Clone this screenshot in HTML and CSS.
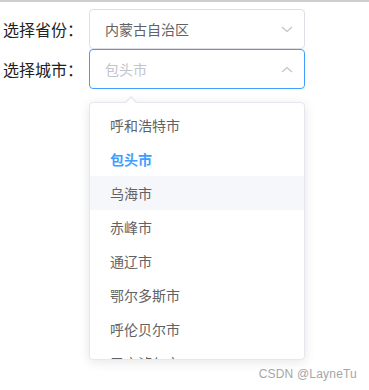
FILE: index.html
```html
<!DOCTYPE html>
<html lang="zh-CN">
<head>
<meta charset="utf-8">
<link rel="stylesheet" href="styles.css">
</head>
<body>
<div class="topline"></div>
<div class="form">
  <div class="row">
    <label class="label">选择省份：</label>
    <div class="select">
      <span class="value">内蒙古自治区</span>
      <svg class="arrow" width="12" height="7" viewBox="0 0 12 7"><path d="M1 1 L6 5.5 L11 1" fill="none" stroke="#c0c4cc" stroke-width="1.2"/></svg>
    </div>
  </div>
  <div class="row">
    <label class="label">选择城市：</label>
    <div class="select focus">
      <span class="value placeholder">包头市</span>
      <svg class="arrow" width="12" height="7" viewBox="0 0 12 7"><path d="M1 6 L6 1.5 L11 6" fill="none" stroke="#c0c4cc" stroke-width="1.2"/></svg>
    </div>
  </div>
  <div class="dropdown">
    <ul class="list">
      <li class="item">呼和浩特市</li>
      <li class="item selected">包头市</li>
      <li class="item hover">乌海市</li>
      <li class="item">赤峰市</li>
      <li class="item">通辽市</li>
      <li class="item">鄂尔多斯市</li>
      <li class="item">呼伦贝尔市</li>
      <li class="item">巴彦淖尔市</li>
    </ul>
  </div>
</div>
<div class="watermark">CSDN @LayneTu</div>
</body>
</html>
```
FILE: styles.css
```css
html, body {
  margin: 0;
  padding: 0;
  background: #fff;
  width: 369px;
  height: 390px;
  overflow: hidden;
  font-family: "Noto Sans CJK SC", "Noto Sans", sans-serif;
}
.topline {
  height: 2px;
  background: #cfcfcf;
}
.form {
  padding-top: 7px;
  position: relative;
}
.row {
  display: flex;
  align-items: center;
  height: 40px;
}
.label {
  width: 86px;
  padding-left: 3px;
  font-size: 16px;
  color: #222;
  line-height: 40px;
}
.select {
  box-sizing: border-box;
  width: 216px;
  height: 40px;
  border: 1px solid #dcdfe6;
  border-radius: 4px;
  display: flex;
  align-items: center;
  justify-content: space-between;
  padding: 0 10px 0 15px;
}
.select.focus {
  border-color: #409eff;
}
.value {
  font-size: 14px;
  color: #606266;
}
.value.placeholder {
  color: #c0c4cc;
}
.arrow {
  margin-right: 1px;
}
.dropdown {
  position: absolute;
  left: 89px;
  top: 100px;
  width: 216px;
  height: 258px;
  box-sizing: border-box;
  border: 1px solid #e4e7ed;
  border-radius: 4px;
  background: #fff;
  box-shadow: 0 2px 12px 0 rgba(0, 0, 0, 0.1);
}
.dropdown::before {
  content: "";
  position: absolute;
  left: 35px;
  top: -7px;
  border: 6px solid transparent;
  border-top: 0;
  border-bottom: 6px solid #e4e7ed;
}
.dropdown::after {
  content: "";
  position: absolute;
  left: 36px;
  top: -5px;
  border: 5px solid transparent;
  border-top: 0;
  border-bottom: 5px solid #fff;
}
.list {
  list-style: none;
  margin: 0;
  padding: 5px 0 0;
  height: 251px;
  overflow: hidden;
}
.item {
  height: 34px;
  line-height: 34px;
  padding: 0 20px;
  font-size: 14px;
  color: #606266;
}
.item.selected {
  color: #409eff;
  font-weight: 700;
}
.item.hover {
  background: #f5f7fa;
}
.watermark {
  position: absolute;
  right: 12px;
  bottom: 9px;
  font-family: "Liberation Sans", Arial, sans-serif;
  font-size: 12px;
  color: #a6a6a6;
  letter-spacing: 0.2px;
}
```
